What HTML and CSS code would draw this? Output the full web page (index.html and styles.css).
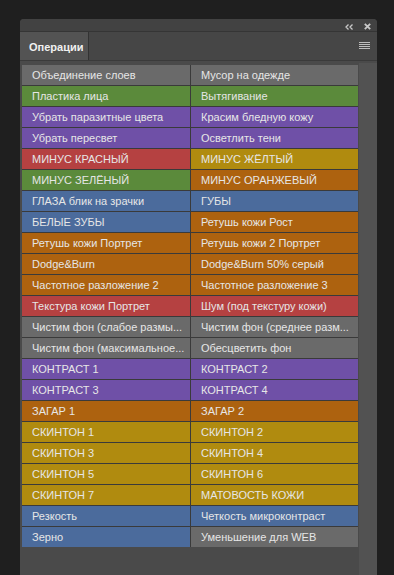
FILE: index.html
```html
<!DOCTYPE html>
<html>
<head>
<meta charset="utf-8">
<link rel="stylesheet" href="styles.css">
</head>
<body>
<div class="panel">
  <div class="titlebar">
    <svg class="ico-collapse" width="8" height="6" viewBox="0 0 8 6"><path d="M3.5 0.5 L1 3 L3.5 5.5 M7.5 0.5 L5 3 L7.5 5.5" fill="none" stroke="#c8c8c8" stroke-width="1.3"/></svg>
    <svg class="ico-close" width="7" height="7" viewBox="0 0 7 7"><path d="M0.8 0.8 L6.2 6.2 M6.2 0.8 L0.8 6.2" fill="none" stroke="#c8c8c8" stroke-width="1.8"/></svg>
  </div>
  <div class="tabrow">
    <div class="tab">Операции</div>
    <div class="tabfill">
      <svg class="ico-menu" width="11" height="8" viewBox="0 0 11 8"><path d="M0 0.5 H11 M0 2.5 H11 M0 4.5 H11 M0 6.5 H11" stroke="#bdbdbd" stroke-width="1"/></svg>
    </div>
  </div>
  <div class="content">
    <div class="list">
      <div class="cell gray">Объединение слоев</div><div class="cell gray">Мусор на одежде</div>
      <div class="cell green">Пластика лица</div><div class="cell green">Вытягивание</div>
      <div class="cell purple">Убрать паразитные цвета</div><div class="cell purple">Красим бледную кожу</div>
      <div class="cell purple">Убрать пересвет</div><div class="cell purple">Осветлить тени</div>
      <div class="cell red">МИНУС КРАСНЫЙ</div><div class="cell yellow">МИНУС ЖЁЛТЫЙ</div>
      <div class="cell green">МИНУС ЗЕЛЁНЫЙ</div><div class="cell orange">МИНУС ОРАНЖЕВЫЙ</div>
      <div class="cell blue">ГЛАЗА блик на зрачки</div><div class="cell blue">ГУБЫ</div>
      <div class="cell blue">БЕЛЫЕ ЗУБЫ</div><div class="cell orange">Ретушь кожи Рост</div>
      <div class="cell orange">Ретушь кожи Портрет</div><div class="cell orange">Ретушь кожи 2 Портрет</div>
      <div class="cell orange">Dodge&amp;Burn</div><div class="cell orange">Dodge&amp;Burn 50% серый</div>
      <div class="cell orange">Частотное разложение 2</div><div class="cell orange">Частотное разложение 3</div>
      <div class="cell red">Текстура кожи Портрет</div><div class="cell red">Шум (под текстуру кожи)</div>
      <div class="cell gray">Чистим фон (слабое размы...</div><div class="cell gray">Чистим фон (среднее разм...</div>
      <div class="cell gray">Чистим фон (максимальное...</div><div class="cell gray">Обесцветить фон</div>
      <div class="cell purple">КОНТРАСТ 1</div><div class="cell purple">КОНТРАСТ 2</div>
      <div class="cell purple">КОНТРАСТ 3</div><div class="cell purple">КОНТРАСТ 4</div>
      <div class="cell orange">ЗАГАР 1</div><div class="cell orange">ЗАГАР 2</div>
      <div class="cell yellow">СКИНТОН 1</div><div class="cell yellow">СКИНТОН 2</div>
      <div class="cell yellow">СКИНТОН 3</div><div class="cell yellow">СКИНТОН 4</div>
      <div class="cell yellow">СКИНТОН 5</div><div class="cell yellow">СКИНТОН 6</div>
      <div class="cell yellow">СКИНТОН 7</div><div class="cell yellow">МАТОВОСТЬ КОЖИ</div>
      <div class="cell blue">Резкость</div><div class="cell blue">Четкость микроконтраст</div>
      <div class="cell blue">Зерно</div><div class="cell gray">Уменьшение для WEB</div>
    </div>
    <div class="scrolltrack"></div>
  </div>
</div>
</body>
</html>
```
FILE: styles.css
```css
html, body {
  margin: 0;
  padding: 0;
  background: #1f1f1f;
  height: 575px;
  overflow: hidden;
}
.panel {
  margin: 19px 0 0 20px;
  width: 357px;
  height: 556px;
  background: #4a4a4a;
  border-radius: 4px 4px 0 0;
  display: flex;
  flex-direction: column;
  font-family: "Liberation Sans", Arial, sans-serif;
}
.titlebar {
  height: 13px;
  background: #424242;
  border-radius: 4px 4px 0 0;
  display: flex;
  align-items: center;
  justify-content: flex-end;
  gap: 11px;
  padding-right: 6px;
  padding-top: 3px;
  box-sizing: border-box;
  border-bottom: 1px solid #353535;
}
.tabrow {
  height: 28px;
  display: flex;
  background: #464646;
  border-bottom: 1px solid #3a3a3a;
}
.tab {
  width: 69px;
  box-sizing: border-box;
  background: #535353;
  border-right: 1px solid #333333;
  color: #f0f0f0;
  font-weight: bold;
  font-size: 11px;
  display: flex;
  align-items: center;
  padding-left: 9px;
  padding-top: 1px;
}
.tabfill {
  flex: 1;
  display: flex;
  align-items: center;
  justify-content: flex-end;
  padding-right: 7px;
}
.content {
  flex: 1;
  display: flex;
  padding: 4px 0 0 2px;
  gap: 1px;
}
.list {
  width: 336px;
  align-self: flex-start;
  display: grid;
  grid-template-columns: 168px 167px;
  column-gap: 1px;
  row-gap: 1px;
  background: #3a3a3a;
}
.cell {
  height: 20px;
  line-height: 20px;
  padding-left: 10px;
  font-size: 11px;
  color: #e6e6e6;
  white-space: nowrap;
  overflow: hidden;
}
.gray { background: #6a6a6a; }
.green { background: #5b8a3b; }
.purple { background: #6f50a7; }
.red { background: #b54141; }
.yellow { background: #b08b0f; }
.orange { background: #ad620f; }
.blue { background: #4b6b9c; }
.scrolltrack {
  width: 18px;
  margin-top: -2px;
  background: #525252;
}
```
